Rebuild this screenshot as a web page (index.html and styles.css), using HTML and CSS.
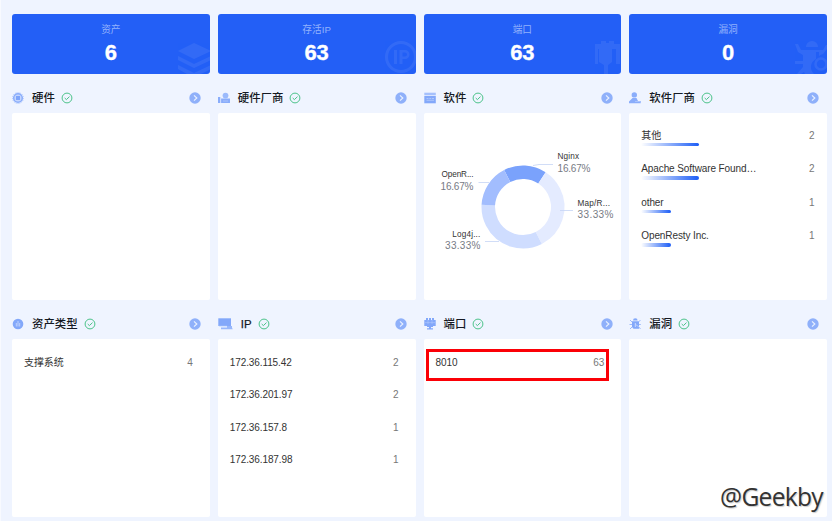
FILE: index.html
```html
<!DOCTYPE html>
<html lang="zh-CN">
<head>
<meta charset="utf-8">
<title>资产概览</title>
<link rel="stylesheet" href="styles.css">
</head>
<body>
<svg class="defs" aria-hidden="true">
  <symbol id="check" viewBox="0 0 12 12"><circle cx="6" cy="6" r="4.9" fill="none" stroke="currentColor"/><path d="M3.7 6 5.4 7.6 8.5 4.6" fill="none" stroke="currentColor"/></symbol>
  <symbol id="go" viewBox="0 0 12 12"><circle cx="6" cy="6" r="5.7" fill="#8fb0fa"/><path d="M5 3.4 7.8 6 5 8.6" fill="none" stroke="#e8f0ff" stroke-width="1.2"/></symbol>
</svg>
<main class="board">
  <section class="stat"><span class="stat-label">资产</span><b class="stat-num">6</b>
    <svg class="ghost" viewBox="0 0 34 36"><path d="M18 5 35 13 18 21 2 13ZM2 18 18 26 35 18V22L18 30 2 22ZM2 27 18 35 35 27V31L25 36H11L2 31Z"/></svg></section>
  <section class="stat"><span class="stat-label">存活IP</span><b class="stat-num">63</b>
    <svg class="ghost" viewBox="0 0 34 36"><circle cx="19" cy="19" r="14.5" fill="none" stroke="#fff" stroke-width="3"/><path d="M12 12h3v14h-3zM17.500 12H23a4.500 4.500 0 0 1 0 9h-2.500v5h-3zM20.500 14.500v4H23a2 2 0 0 0 0-4z"/></svg></section>
  <section class="stat"><span class="stat-label">端口</span><b class="stat-num">63</b>
    <svg class="ghost" viewBox="0 0 34 36"><path d="M8 6h6V3h5v2h3V3h5v3h6v20h-4V11h-4v13l-4 3v9h-4v-9l-5-3V11h-1v15H8z"/></svg></section>
  <section class="stat"><span class="stat-label">漏洞</span><b class="stat-num">0</b>
    <svg class="ghost" viewBox="0 0 34 36"><path d="M13 9a6 6 0 0 1 12 0zM2 6h3l3 6h22l3-5h1v4l-4 5a9 9 0 0 0-4 2v-4h-3v7a9 9 0 0 0-2 15H12l-1-2-3 2H4l6-7v-3H2v-3h8v-6l-5-3z"/><circle cx="28" cy="26" r="5.500" fill="none" stroke="#fff" stroke-width="2.500"/></svg></section>

  <section class="block">
    <header class="head"><svg class="icon" viewBox="0 0 12 12"><circle cx="6" cy="6" r="4.300" fill="#c5d6fe" stroke="#8aadfb" stroke-width="1.500"/><circle cx="6" cy="6" r="5.400" fill="none" stroke="#a9c3fc" stroke-dasharray="1.200 1"/><path d="M4 4h4v4H4z" fill="#7fa5fb"/></svg><h2>硬件</h2><svg class="check"><use href="#check"/></svg><svg class="go"><use href="#go"/></svg></header>
    <div class="panel"></div>
  </section>
  <section class="block">
    <header class="head"><svg class="icon" viewBox="0 0 12 12"><path d="M0 5h2.500v6H0zM3 6.500h9V11H3z" fill="#8aadfb"/><circle cx="7.500" cy="3.600" r="2.900" fill="#9bbafc"/><path d="M2.700 5v6" stroke="#dce7ff" stroke-width=".7"/><path d="M5 9h5" stroke="#b7cdfd" stroke-width=".7"/></svg><h2>硬件厂商</h2><svg class="check"><use href="#check"/></svg><svg class="go"><use href="#go"/></svg></header>
    <div class="panel"></div>
  </section>
  <section class="block">
    <header class="head"><svg class="icon" viewBox="0 0 12 12"><path d="M.3.700h11.500v2.600H.3z" fill="#a5c0fc"/><path d="M.3 4h11.500v7.300H.3z" fill="#83a8fa"/><path d="M2.500 6.500h2M5.300 6.500h2M8 6.500h2M2.500 8.300h7.500" stroke="#b7cdfd" stroke-width=".8"/></svg><h2>软件</h2><svg class="check"><use href="#check"/></svg><svg class="go"><use href="#go"/></svg></header>
    <div class="panel">
      <svg class="donut" viewBox="0 0 197 186">
        <g class="ring" transform="rotate(-117 99 94)">
          <circle class="s1" cx="99" cy="94" r="34.750" pathLength="360"/>
          <circle class="s2" cx="99" cy="94" r="34.750" pathLength="360"/>
          <circle class="s3" cx="99" cy="94" r="34.750" pathLength="360"/>
          <circle class="s4" cx="99" cy="94" r="34.750" pathLength="360"/>
        </g>
        <path class="lead" d="M109 52.500l6-1h14M54.500 69.500H65M136 97.500h13M61 128.500h14"/>
        <text class="name" x="133.500" y="46" textLength="21.500">Nginx</text><text class="pct" x="133.500" y="59" textLength="33">16.67%</text>
        <text class="name" x="17.500" y="64" textLength="32">OpenR...</text><text class="pct" x="16.500" y="77" textLength="33">16.67%</text>
        <text class="name" x="153.500" y="93" textLength="32.500">Map/R...</text><text class="pct" x="153.500" y="105" textLength="36">33.33%</text>
        <text class="name" x="28.300" y="124" textLength="28">Log4j...</text><text class="pct" x="21" y="136" textLength="35.500">33.33%</text>
      </svg>
    </div>
  </section>
  <section class="block">
    <header class="head"><svg class="icon" viewBox="0 0 12 12"><circle cx="5.300" cy="2.900" r="2.700" fill="#8aadfb"/><path d="M0 11.300V9.500L3.500 6h4L9 9h2.700v2.300z" fill="#8aadfb"/><path d="M6 9.500h5" stroke="#b7cdfd" stroke-width=".7"/></svg><h2>软件厂商</h2><svg class="check"><use href="#check"/></svg><svg class="go"><use href="#go"/></svg></header>
    <div class="panel bars">
      <div class="row"><span>其他</span><em>2</em><i style="width:58px"></i></div>
      <div class="row"><span>Apache Software Found…</span><em>2</em><i style="width:58px"></i></div>
      <div class="row"><span>other</span><em>1</em><i style="width:29.500px"></i></div>
      <div class="row"><span>OpenResty Inc.</span><em>1</em><i style="width:29.500px"></i></div>
    </div>
  </section>

  <section class="block">
    <header class="head"><svg class="icon" viewBox="0 0 12 12"><circle cx="6" cy="6" r="5.300" fill="#83a8fa"/><path d="M4.300 5v3.500M6 3v5.500M7.700 5v3.500" stroke="#c5d6fe" stroke-width=".9"/></svg><h2>资产类型</h2><svg class="check"><use href="#check"/></svg><svg class="go"><use href="#go"/></svg></header>
    <div class="panel list"><div class="row"><span>支撑系统</span><em>4</em></div></div>
  </section>
  <section class="block">
    <header class="head wide"><svg class="icon" viewBox="0 0 15 12"><path d="M.3.300H13V8H.3z" fill="#83a8fa"/><path d="M3 9.500h6V8h5v1.500l.7 1.800H3z" fill="#98b7fb"/><path d="M1 8.300h8" stroke="#c9dafe" stroke-width=".8"/></svg><h2>IP</h2><svg class="check"><use href="#check"/></svg><svg class="go"><use href="#go"/></svg></header>
    <div class="panel list">
      <div class="row"><span>172.36.115.42</span><em>2</em></div>
      <div class="row"><span>172.36.201.97</span><em>2</em></div>
      <div class="row"><span>172.36.157.8</span><em>1</em></div>
      <div class="row"><span>172.36.187.98</span><em>1</em></div>
    </div>
  </section>
  <section class="block">
    <header class="head"><svg class="icon" viewBox="0 0 12 12"><path d="M2 0h2v2h1V0h2v2h1V0h2v2h1.700v6H9v1H7v1.200h2v1.200H3v-1.200h2V9H3V8H.3V2H2z" fill="#83a8fa"/><path d="M1 4.600h10M4 2v4M8 2v4" stroke="#b7cdfd" stroke-width=".5"/></svg><h2>端口</h2><svg class="check"><use href="#check"/></svg><svg class="go"><use href="#go"/></svg></header>
    <div class="panel list marked"><div class="row"><span>8010</span><em>63</em></div></div>
  </section>
  <section class="block">
    <header class="head"><svg class="icon" viewBox="0 0 12 12"><path d="M4 2.600a2.300 2.300 0 0 1 4.600 0zM3 3.300h7v7.500H4.500L3 9z" fill="#83a8fa"/><path d="M1 2l2 2M11.500 2l-2 2M.5 6.500H3M10 6.500h1.800M1 11l2-2M9 8l2.500 3" stroke="#9dbbfc"/><path d="M6.300 5v4M7 6.500l2 2" stroke="#dce7ff" stroke-width=".8"/></svg><h2>漏洞</h2><svg class="check"><use href="#check"/></svg><svg class="go"><use href="#go"/></svg></header>
    <div class="panel"></div>
  </section>
</main>
<div class="signature">@Geekby</div>
</body>
</html>
```
FILE: styles.css
```css
* { box-sizing: border-box; }
body {
  margin: 0;
  width: 832px;
  height: 521px;
  overflow: hidden;
  position: relative;
  background: #eff4ff;
  border-left: 1px solid #f8faff;
  font-family: "Liberation Sans", "Noto Sans CJK SC", sans-serif;
  color: #333;
}
.defs { position: absolute; width: 0; height: 0; }
.board {
  display: grid;
  grid-template-columns: repeat(4, 1fr);
  grid-template-rows: 60px 226px 217px;
  column-gap: 8px;
  padding: 14px 5px 4px 11px;
}
.stat {
  position: relative;
  overflow: hidden;
  display: flex;
  flex-direction: column;
  align-items: center;
  background: #235ff6;
  border-radius: 3px;
}
.stat-label { margin-top: 8.5px; font-size: 9.7px; line-height: 14px; color: #92b1fc; }
.stat-num { margin-top: 3.5px; font-size: 22px; line-height: 25px; color: #fff; -webkit-text-stroke: .3px #fff; }
.ghost { position: absolute; right: 0; bottom: 0; width: 34px; height: 36px; fill: #fff; opacity: .07; }

.block { display: flex; flex-direction: column; }
.head { height: 39px; display: flex; align-items: center; padding: 8px 8.5px 0 0; flex: none; }
.icon { width: 12px; height: 12px; }
.wide .icon { width: 15px; }
.head h2 { margin: 0 6px 0 8px; font-size: 11.4px; line-height: 16px; font-weight: 500; color: #151923; }
.wide h2 { -webkit-text-stroke: .25px #151923; }
.check { width: 12px; height: 12px; color: #4cc38a; }
.go { width: 12px; height: 12px; margin-left: auto; }
.panel { flex: 1; background: #fff; border-radius: 2px; }
.donut { display: block; width: 197px; height: 186px; }
.ring circle { fill: none; stroke-width: 13.5; }
.s1 { stroke: #7aa2fc; stroke-dasharray: 60 300; }
.s2 { stroke: #e4ebff; stroke-dasharray: 120 240; stroke-dashoffset: -60; }
.s3 { stroke: #cfddff; stroke-dasharray: 120 240; stroke-dashoffset: -180; }
.s4 { stroke: #a2bdfe; stroke-dasharray: 60 300; stroke-dashoffset: -300; }
.lead { fill: none; stroke: #c5d4f5; stroke-width: .8; }
.name { font-size: 8.2px; fill: #333; }
.pct { font-size: 10px; fill: #777b84; }

.row { display: flex; justify-content: space-between; position: relative; font-size: 10px; letter-spacing: -.1px; line-height: 14px; }
.row em { font-style: normal; color: #777; }
.bars { padding: 15.5px 12.5px 0 12px; }
.bars .row { height: 33.5px; }
.bars i { position: absolute; left: 0; top: 14px; height: 3.5px; border-radius: 2px; background: linear-gradient(90deg, #fff, #1c5df6); }
.list { padding: 16.5px 17px 0 12px; }
.list .row { height: 32.5px; }
.marked { position: relative; }
.marked::after {
  content: "";
  box-sizing: border-box;
  position: absolute;
  left: 2px;
  top: 10px;
  width: 183px;
  height: 32px;
  border: 3px solid #fb0007;
}
.signature {
  position: absolute;
  right: 9px;
  bottom: 7px;
  font: 24.6px/34px "Open Sans", sans-serif;
  letter-spacing: -.7px;
  color: #333;
  text-shadow: 1px 1px 1px #ccc;
}
```
